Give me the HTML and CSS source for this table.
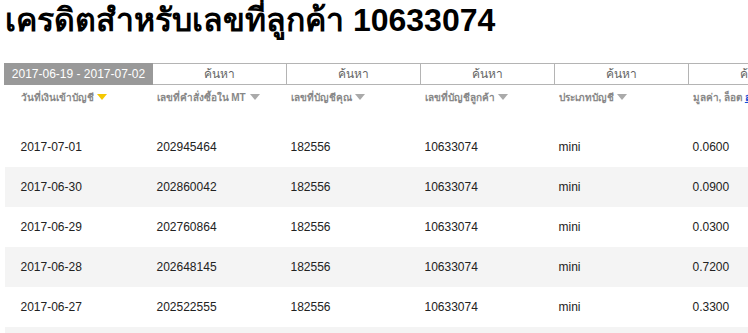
FILE: index.html
```html
<!DOCTYPE html>
<html lang="th">
<head>
<meta charset="utf-8">
<title>เครดิต</title>
<link rel="stylesheet" href="styles.css">
</head>
<body>
<h1 class="title">เครดิตสำหรับเลขที่ลูกค้า 10633074</h1>
<table class="grid">
  <colgroup>
    <col class="c1"><col class="c"><col class="c"><col class="c"><col class="c"><col class="c">
  </colgroup>
  <thead>
    <tr class="filters">
      <th class="date-range">2017-06-19 - 2017-07-02</th>
      <th class="search">ค้นหา</th>
      <th class="search">ค้นหา</th>
      <th class="search">ค้นหา</th>
      <th class="search">ค้นหา</th>
      <th class="search">ค้นหา</th>
    </tr>
    <tr class="heads">
      <th class="first">วันที่เงินเข้าบัญชี <span class="arrow active"></span></th>
      <th>เลขที่คำสั่งซื้อใน MT <span class="arrow"></span></th>
      <th>เลขที่บัญชีคุณ <span class="arrow"></span></th>
      <th>เลขที่บัญชีลูกค้า <span class="arrow"></span></th>
      <th>ประเภทบัญชี <span class="arrow"></span></th>
      <th>มูลค่า, ล็อต <a class="link" href="#">ล</a></th>
    </tr>
  </thead>
  <tbody>
    <tr><td class="first">2017-07-01</td><td>202945464</td><td>182556</td><td>10633074</td><td>mini</td><td>0.0600</td></tr>
    <tr><td class="first">2017-06-30</td><td>202860042</td><td>182556</td><td>10633074</td><td>mini</td><td>0.0900</td></tr>
    <tr><td class="first">2017-06-29</td><td>202760864</td><td>182556</td><td>10633074</td><td>mini</td><td>0.0300</td></tr>
    <tr><td class="first">2017-06-28</td><td>202648145</td><td>182556</td><td>10633074</td><td>mini</td><td>0.7200</td></tr>
    <tr><td class="first">2017-06-27</td><td>202522555</td><td>182556</td><td>10633074</td><td>mini</td><td>0.3300</td></tr>
    <tr><td class="first"></td><td></td><td></td><td></td><td></td><td></td></tr>
  </tbody>
</table>
</body>
</html>
```
FILE: styles.css
```css
html, body {
  margin: 0;
  padding: 0;
  background: #fff;
  overflow: hidden;
}
body {
  padding: 0 0 0 4px;
  font-family: "Liberation Sans", Arial, "Noto Sans", sans-serif;
  color: #222;
  width: 900px;
}
.title {
  margin: 0;
  padding: 0 0 0 1px;
  font-size: 32px;
  font-weight: bold;
  line-height: 40px;
  height: 63px;
  color: #000;
}
.grid {
  border-collapse: collapse;
  table-layout: fixed;
  width: 818px;
}
.c1 { width: 148px; }
.c { width: 134px; }
.filters th {
  height: 20px;
  padding: 0;
  font-size: 12px;
  font-weight: normal;
  text-align: center;
  line-height: 18px;
}
.date-range {
  background: #999;
  color: #fff;
  border: 1px solid #999;
}
.search {
  border: 1px solid #b4b4b4;
  color: #666;
  background: #fff;
}
.heads th {
  height: 36px;
  padding: 6px 4px 0;
  vertical-align: top;
  text-align: left;
  font-size: 10px;
  font-weight: bold;
  color: #888;
  line-height: 14px;
  white-space: nowrap;
  overflow: hidden;
}
.heads th.first { padding-left: 16px; }
.arrow {
  display: inline-block;
  width: 0;
  height: 0;
  border-left: 5px solid transparent;
  border-right: 5px solid transparent;
  border-top: 6px solid #aaa;
  vertical-align: 1px;
  margin-left: 1px;
}
.arrow.active { border-top-color: #f5c800; }
.link {
  color: #1a4fd6;
  text-decoration: underline;
}
tbody td {
  height: 40px;
  padding: 0 4px;
  font-size: 12px;
  color: #222;
  white-space: nowrap;
}
tbody td.first { padding-left: 16px; }
tbody tr:nth-child(even) td { background: #f4f4f4; }
```
